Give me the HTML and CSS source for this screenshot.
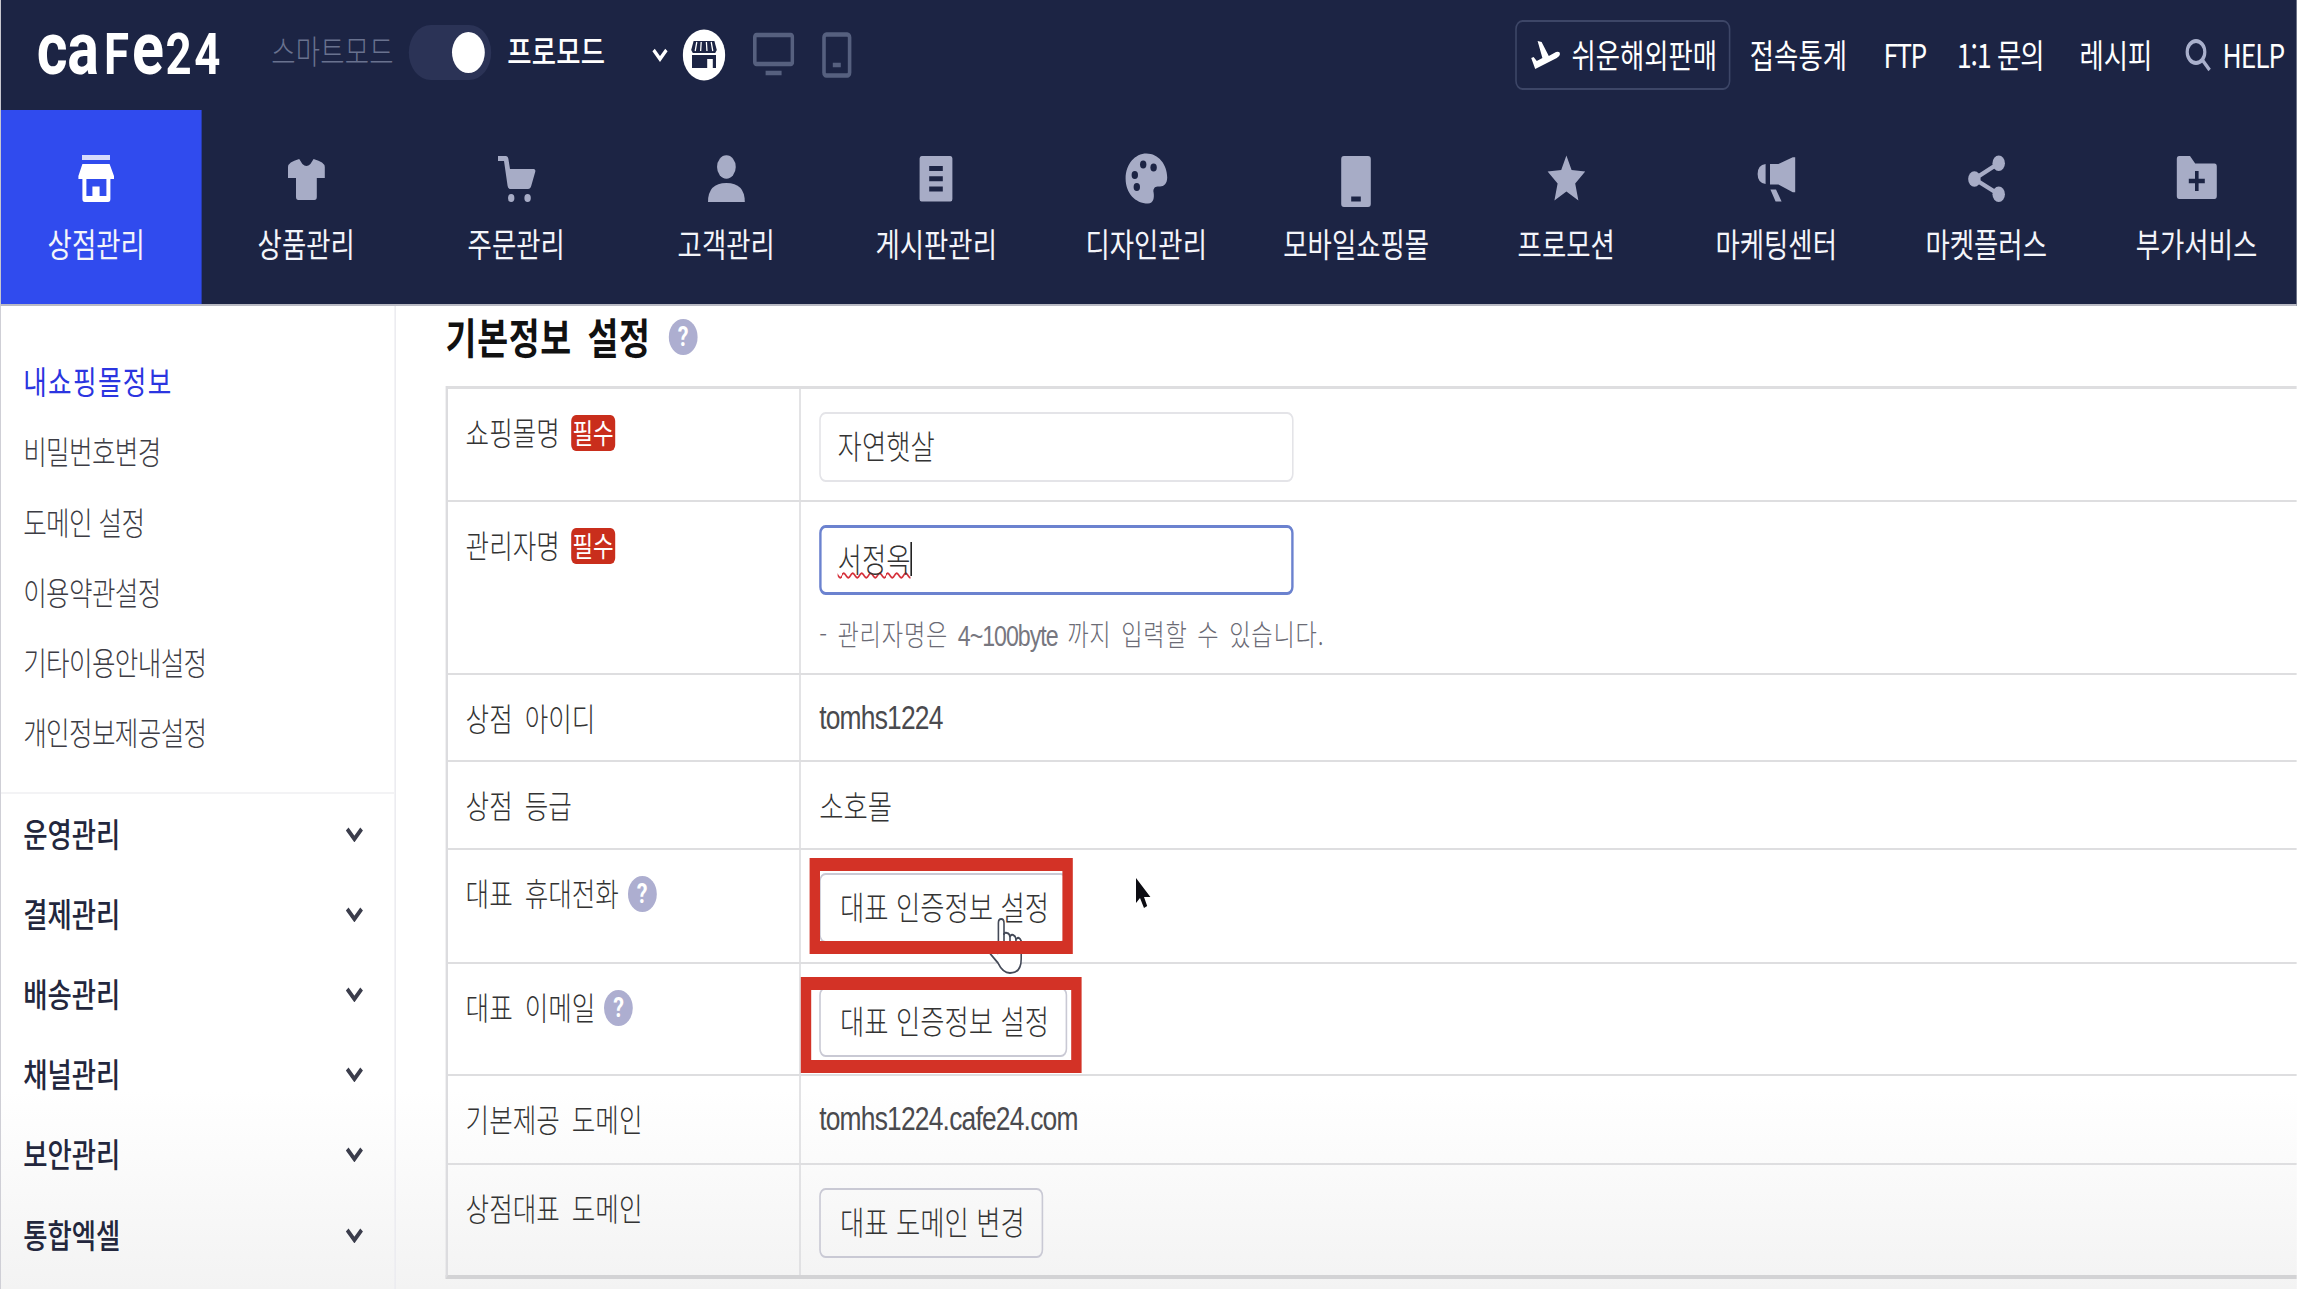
FILE: index.html
```html
<!DOCTYPE html>
<html lang="ko">
<head>
<meta charset="UTF-8" />
<meta name="viewport" content="width=device-width, initial-scale=1" />
<title>기본정보 설정</title>
<link rel="stylesheet" href="styles.css">
</head>
<body>
<div class="page">

<header>
  <div class="topbar">
    <a class="logo"><span class="lc">c</span><span class="la">a</span><span class="lf">F</span><span class="le">e</span><span class="ln">24</span></a>
    <span class="mode">스마트모드</span>
    <span class="toggle"><i></i></span>
    <span class="mode on">프로모드</span>
    <svg class="arrow" width="20" height="14" viewBox="0 0 20 14"><path d="M2 2l8 9 8-9" fill="none" stroke="#fff" stroke-width="4"/></svg>
    <svg class="view" width="54" height="52" viewBox="0 0 54 52">
      <ellipse cx="27" cy="26" rx="26.5" ry="25.5" fill="#fff"/>
      <path d="M14 12h26l3 9-2 3H13l-2-3z" fill="#1c2444"/>
      <path d="M18 13l-2 9M23.500 13l-.7 9M30 13l.7 9M36 13l2 9" stroke="#fff" stroke-width="1.600"/>
      <path d="M12 26h30v13H12z" fill="#1c2444"/>
      <path d="M31 30h7v9h-7z" fill="#fff"/>
    </svg>
    <svg class="view" width="52" height="46" viewBox="0 0 52 46" fill="none" stroke="#56607f" stroke-width="4.500"><rect x="2.500" y="3" width="47" height="29" rx="2"/><path d="M16 41h20"/></svg>
    <svg class="view" width="38" height="46" viewBox="0 0 38 46" fill="none" stroke="#56607f" stroke-width="4.500"><rect x="3" y="2.500" width="32" height="41" rx="3"/><path d="M14 33h10"/></svg>

    <nav class="util">
      <a class="global"><svg width="38" height="28" viewBox="0 0 38 28"><path d="M9 0l5 1 9 14 9-4q5-1 5 2 0 2-4 4L6 28 1 17l3-1 4 4 7-3z" fill="#fff"/></svg><span>쉬운해외판매</span></a>
      <a class="stat"><span>접속통계</span></a>
      <a class="ftp"><span>FTP</span></a>
      <a class="qna"><span>1:1 문의</span></a>
      <a class="recipe"><span>레시피</span></a>
      <a class="help"><svg width="34" height="34" viewBox="0 0 34 34" fill="none" stroke="#a9b0cc" stroke-width="4"><circle cx="14" cy="14" r="11"/><path d="M22 22l9 10"/></svg><span>HELP</span></a>
    </nav>
  </div>

  <ul class="gnb">
    <li class="active">
      <svg viewBox="0 0 56 60"><path d="M10.500 5h35v5h-35z" opacity=".8"/><path fill-rule="evenodd" d="M11 14h34l5.500 12v3h-4.500v20q0 3-3 3H14q-3 0-3-3V29H6v-3zM16 29v17h7.500V36.500h9V46H41V29z"/></svg>
      <span>상점관리</span>
    </li>
    <li>
      <svg viewBox="0 0 56 60"><path d="M19 9l4 5q5 4 10 0l4-5q14 3 14 8v11H41v19q0 3-3 3H18q-3 0-3-3V28H5V17q0-5 14-8z"/></svg>
      <span>상품관리</span>
    </li>
    <li>
      <svg viewBox="0 0 56 60"><path d="M5.500 6H15q3 0 3.500 3l2 10H50q3 0 2 3l-5 14q-1 3-4 3H21q-3 0-3.500-3L13 11H5.500z"/><circle cx="22" cy="48" r="4"/><circle cx="42.500" cy="48" r="4"/></svg>
      <span>주문관리</span>
    </li>
    <li>
      <svg viewBox="0 0 56 60"><circle cx="28" cy="17" r="11.700"/><path d="M5 52q0-19 23-19t23 19z"/></svg>
      <span>고객관리</span>
    </li>
    <li>
      <svg viewBox="0 0 56 60"><path fill-rule="evenodd" d="M10 6h36q2.500 0 2.500 2.500V49q0 2.500-2.500 2.500H10q-2.500 0-2.500-2.500V8.500Q7.500 6 10 6zM19.500 16v5h17v-5zM19.500 26.300v5h17v-5zM19.500 36.500v5h17v-5z"/></svg>
      <span>게시판관리</span>
    </li>
    <li>
      <svg viewBox="0 0 56 60"><path d="M28 3.500c15 0 26 11 26 24 0 6-4 9-9 9h-3c-4 0-6 3-5 6 1 5 0 11-7 11C14 53.500 2 43 2 28.500S14 3.500 28 3.500z"/><g fill="#1c2444"><circle cx="24" cy="14.500" r="4"/><circle cx="37" cy="17.500" r="4"/><circle cx="13.500" cy="25" r="4"/><circle cx="16" cy="37" r="4"/></g></svg>
      <span>디자인관리</span>
    </li>
    <li>
      <svg viewBox="0 0 56 60"><path fill-rule="evenodd" d="M13 6h30q3.500 0 3.500 3v45q0 3-3.500 3H13q-3.500 0-3.500-3V9q0-3 3.500-3zM22 46.500v5h12v-5z"/></svg>
      <span>모바일쇼핑몰</span>
    </li>
    <li>
      <svg viewBox="0 0 56 60"><path d="M28 5.500l6.500 14.500 17 1.500-12.500 12L43 50.500l-15-9-15 9 4-17-12.500-12 17-1.500z"/></svg>
      <span>프로모션</span>
    </li>
    <li>
      <svg viewBox="0 0 56 60"><path d="M15 14v20Q5 33 5 24t10-10zM20.500 14H31L49 7.300h3v35h-3L31 34.500H20.500zM21 39.500h7l7 12h-7.500z"/></svg>
      <span>마케팅센터</span>
    </li>
    <li>
      <svg viewBox="0 0 56 60"><path d="M43.400 13.300L13 29l30.400 15.300" fill="none" stroke="#a7acc6" stroke-width="4.500"/><circle cx="13" cy="29" r="7.800"/><circle cx="43.400" cy="13.300" r="7.800"/><circle cx="43.400" cy="44.300" r="7.800"/></svg>
      <span>마켓플러스</span>
    </li>
    <li>
      <svg viewBox="0 0 56 60"><path d="M6 6h13.500l6.500 7.500h24q3 0 3 3V46q0 3-3 3H6q-3 0-3-3V9q0-3 3-3z"/><path d="M28 21v20M18 31h20" stroke="#1c2444" stroke-width="4.500"/></svg>
      <span>부가서비스</span>
    </li>
  </ul>
</header>

<main>
  <aside>
    <ul class="submenu">
      <li class="current">내쇼핑몰정보</li>
      <li>비밀번호변경</li>
      <li>도메인 설정</li>
      <li>이용약관설정</li>
      <li>기타이용안내설정</li>
      <li>개인정보제공설정</li>
    </ul>
    <ul class="groups">
      <li><span>운영관리</span><svg width="22" height="15" viewBox="0 0 22 15"><path d="M2 2l9 10 9-10"/></svg></li>
      <li><span>결제관리</span><svg width="22" height="15" viewBox="0 0 22 15"><path d="M2 2l9 10 9-10"/></svg></li>
      <li><span>배송관리</span><svg width="22" height="15" viewBox="0 0 22 15"><path d="M2 2l9 10 9-10"/></svg></li>
      <li><span>채널관리</span><svg width="22" height="15" viewBox="0 0 22 15"><path d="M2 2l9 10 9-10"/></svg></li>
      <li><span>보안관리</span><svg width="22" height="15" viewBox="0 0 22 15"><path d="M2 2l9 10 9-10"/></svg></li>
      <li><span>통합엑셀</span><svg width="22" height="15" viewBox="0 0 22 15"><path d="M2 2l9 10 9-10"/></svg></li>
    </ul>
  </aside>

  <section class="content">
    <h1><span>기본정보 설정</span> <i class="tip">?</i></h1>
    <div class="form">
      <div class="row r1">
        <div class="label"><span>쇼핑몰명</span> <em>필수</em></div>
        <div class="value"><div class="field">자연햇살</div></div>
      </div>
      <div class="row r2">
        <div class="label"><span>관리자명</span> <em>필수</em></div>
        <div class="value">
          <div class="field focus"><span class="typed">서정옥</span></div>
          <p class="hint">- 관리자명은 <span>4~100byte</span> 까지 입력할 수 있습니다.</p>
        </div>
      </div>
      <div class="row r3">
        <div class="label"><span>상점 아이디</span></div>
        <div class="value"><span class="text latin">tomhs1224</span></div>
      </div>
      <div class="row r4">
        <div class="label"><span>상점 등급</span></div>
        <div class="value"><span class="text">소호몰</span></div>
      </div>
      <div class="row r5">
        <div class="label"><span>대표 휴대전화</span> <i class="tip">?</i></div>
        <div class="value">
          <div class="btn">대표 인증정보 설정
            <svg class="hand" width="42" height="56" viewBox="0 0 42 56"><path d="M12 31V5q0-4 3.500-4T19 5v12q0-3 4-2 3 .5 3.500 4 1-3 4-2t3.500 4q4-3 6.500 2v18q0 14-14 14-9 0-15-10L2 36q-2-5 3-6 4 0 7 6" fill="#fff" stroke="#444a58" stroke-width="2"/><path d="M19 15v10M26.500 18v8M34 20v7" stroke="#444a58" stroke-width="2"/></svg>
            <b class="mark m1"></b>
          </div>
          <svg class="cursor" width="20" height="32" viewBox="0 0 20 32"><path d="M1 1v25l5-5 5 10 4-2-4-9h8z" fill="#0c0c12"/></svg>
        </div>
      </div>
      <div class="row r6">
        <div class="label"><span>대표 이메일</span> <i class="tip">?</i></div>
        <div class="value"><div class="btn">대표 인증정보 설정<b class="mark m2"></b></div></div>
      </div>
      <div class="row r7">
        <div class="label"><span>기본제공 도메인</span></div>
        <div class="value"><span class="text latin">tomhs1224.cafe24.com</span></div>
      </div>
      <div class="row r8">
        <div class="label"><span>상점대표 도메인</span></div>
        <div class="value"><div class="btn clear">대표 도메인 변경</div></div>
      </div>
    </div>
  </section>
</main>

</div>
</body>
</html>
```

FILE: styles.css
```css
* { box-sizing: border-box; }
body, html {
  margin: 0; padding: 0; height: 100%;
  overflow: hidden;
  background: #fff;
}
ul { list-style: none; margin: 0; padding: 0; }
svg { display: block; flex: none; }

/* condensed layout: everything is laid out at 125% and squeezed back */
.page {
  width: 125%;
  height: 1289px;
  overflow: hidden;
  transform: scaleX(0.8);
  transform-origin: 0 0;
  border-left: 1px solid #c4c4cc;
  background: linear-gradient(#fff 1090px, #f3f3f3 1289px);
  font-family: "Noto Sans CJK KR", sans-serif;
  font-size: 33px;
  color: #333;
  white-space: nowrap;
}

/* header */
header {
  height: 306px;
  background: #1c2444;
  border-bottom: 2px solid #b9bac4;
  overflow: hidden;
}
.topbar {
  display: flex;
  align-items: center;
  height: 110px;
  padding-left: 45px;
  color: #fff;
}
.logo {
  display: flex;
  align-items: baseline;
  width: 293px;
  height: 110px;
  font-family: Roboto, sans-serif;
  font-weight: 700;
  line-height: 97px;
}
.lc, .la, .le { font-size: 74px; }
.lf, .ln { font-size: 57px; }
.lc { width: 38px; }
.la { width: 46px; }
.lf { width: 35px; }
.le { width: 42px; }
.ln { letter-spacing: 3px; }
.mode {
  width: 172px;
  margin-top: -11px;
  color: #69728f;
  font-weight: 300;
  letter-spacing: 0.3px;
}
.mode.on {
  width: 181px;
  color: #fff;
  font-weight: 500;
}
.toggle {
  width: 103px;
  height: 55px;
  margin-right: 20px;
  margin-top: -5px;
  padding: 7px 8px;
  border-radius: 28px;
  background: #2b3356;
}
.toggle i {
  display: block;
  width: 41px;
  height: 41px;
  margin-left: auto;
  border-radius: 50%;
  background: #fff;
}
.arrow { margin-right: 18px; }
.view { margin-right: 34px; }
.util {
  display: flex;
  align-items: center;
  margin-left: auto;
}
.util a { display: flex; align-items: center; height: 70px; }
.util span, .groups span { margin-top: -3px; }
.util .global {
  width: 269px;
  border: 2px solid #3d4667;
  border-radius: 9px;
  padding-left: 17px;
  margin-right: 24px;
}
.global svg { margin-right: 13px; }
.util .stat { width: 167px; }
.util .ftp { width: 92px; letter-spacing: -2px; }
.util .qna { width: 153px; letter-spacing: -1.3px; }
.util .recipe { width: 132px; }
.util .help { width: 140px; letter-spacing: -1.3px; }
.help svg { margin-right: 13px; }

.gnb { display: flex; }
.gnb li {
  flex: none;
  width: 262.5px;
  height: 194px;
  padding-top: 40px;
  text-align: center;
  color: #f4f5fa;
}
.gnb li.active {
  width: 250.5px;
  padding-right: 12px;
  background: #304bee;
}
.gnb li:last-child { flex: 1; padding-left: 6px; }
.gnb svg {
  width: 56px;
  height: 60px;
  margin: 0 auto;
  fill: #a7acc6;
}
.gnb .active svg { fill: #fff; }
.gnb span { display: block; line-height: 67px; }

/* left menu */
main { display: flex; height: 983px; }
aside {
  flex: none;
  width: 494px;
  border-right: 2px solid #ececf0;
}
.submenu {
  height: 488px;
  padding: 39px 0 0 28px;
  border-bottom: 2px solid #f3f3f5;
}
.submenu li {
  height: 70.3px;
  line-height: 70px;
  font-size: 32px;
  font-weight: 300;
  letter-spacing: -0.8px;
  color: #3c3c44;
}
.submenu .current { color: #2b35e0; font-weight: 400; letter-spacing: 1.7px; }
.groups { padding-left: 28px; }
.groups li {
  display: flex;
  align-items: center;
  justify-content: space-between;
  height: 80.2px;
  padding-right: 39px;
  font-weight: 500;
  color: #23273d;
}
.groups svg { fill: none; stroke: #3b3d4c; stroke-width: 4.5; }

/* form */
.content { flex: 1; padding-left: 62px; }
h1 {
  display: flex;
  align-items: center;
  height: 64px;
  margin: 0 0 16px;
  font-size: 42px;
  font-weight: 700;
  letter-spacing: 0.8px;
  word-spacing: 7px;
  color: #111;
}
h1 span { margin-top: -6px; }
.tip {
  display: inline-block;
  width: 36px;
  height: 36px;
  border-radius: 50%;
  background: #adaed0;
  color: #fff;
  font: 700 27px/36px Roboto, sans-serif;
  text-align: center;
}
h1 .tip { margin-left: 23px; margin-top: -2px; }
.form {
  border-left: 3px solid #dcdcdf;
  border-bottom: 4px solid #d3d3d5;
}
.row { display: flex; border-top: 2px solid #dedee0; }
.r1 { height: 114px; border-top-width: 3px; }
.r2 { height: 173px; }
.r3 { height: 87px; }
.r4 { height: 88px; }
.r5 { height: 114px; }
.r6 { height: 112px; }
.r7 { height: 89px; }
.r8 { height: 112px; }
.label {
  display: flex;
  align-items: center;
  width: 439px;
  height: 88px;
  padding-left: 22px;
  font-size: 32px;
  font-weight: 300;
  word-spacing: 6px;
}
.label span { margin-top: -4px; }
.label em {
  margin-left: 14px;
  width: 55px;
  height: 36px;
  border-radius: 6px;
  background: #c92e1c;
  color: #fff;
  font-size: 28px;
  font-style: normal;
  font-weight: 400;
  line-height: 34px;
  text-align: center;
}
.label .tip { margin-left: 11px; }
.value {
  position: relative;
  flex: 1;
  padding: 23px 0 0 23px;
  border-left: 2px solid #dcdcdf;
}
.field {
  width: 593px;
  height: 70px;
  padding-left: 21px;
  border: 2px solid #e4e4e8;
  border-radius: 8px;
  background: #fff;
  font-weight: 300;
  line-height: 62px;
}
.field.focus { border: 3px solid #6b82cf; padding-left: 20px; line-height: 60px; }
.typed {
  display: inline-block;
  height: 34px;
  line-height: 32px;
  border-right: 2px solid #222;
  text-decoration: underline wavy #d5303a 2px;
  text-underline-offset: 0;
  text-decoration-skip-ink: none;
}
.hint {
  margin: 16px 0 0;
  font-size: 29px;
  font-weight: 300;
  line-height: 44px;
  letter-spacing: 1px;
  word-spacing: 3px;
  color: #6b6b75;
}
.hint span {
  font-family: "Liberation Sans", sans-serif;
  letter-spacing: -1.3px;
  color: #77777f;
}
.text { display: block; line-height: 40px; font-weight: 300; }
.latin { font-family: "Liberation Sans", sans-serif; letter-spacing: -1px; color: #4a4a4e; }
.btn {
  position: relative;
  width: 310px;
  height: 70px;
  padding-left: 24px;
  border: 2px solid #c9c9d4;
  border-radius: 8px;
  background: #fff;
  font-weight: 300;
  line-height: 62px;
}
.btn.clear { width: 280px; background: none; }

/* highlights over the buttons */
.mark {
  position: absolute;
  border-style: solid;
  border-color: #d33226;
  border-width: 13px 13.5px;
}
.m1 { left: -14px; right: -9px; top: -17px; bottom: -13px; }
.m2 { left: -25px; right: -20px; top: -12px; bottom: -18px; }
.hand { position: absolute; left: 210px; top: 43px; }
.cursor { position: absolute; left: 418px; top: 27px; }
```
